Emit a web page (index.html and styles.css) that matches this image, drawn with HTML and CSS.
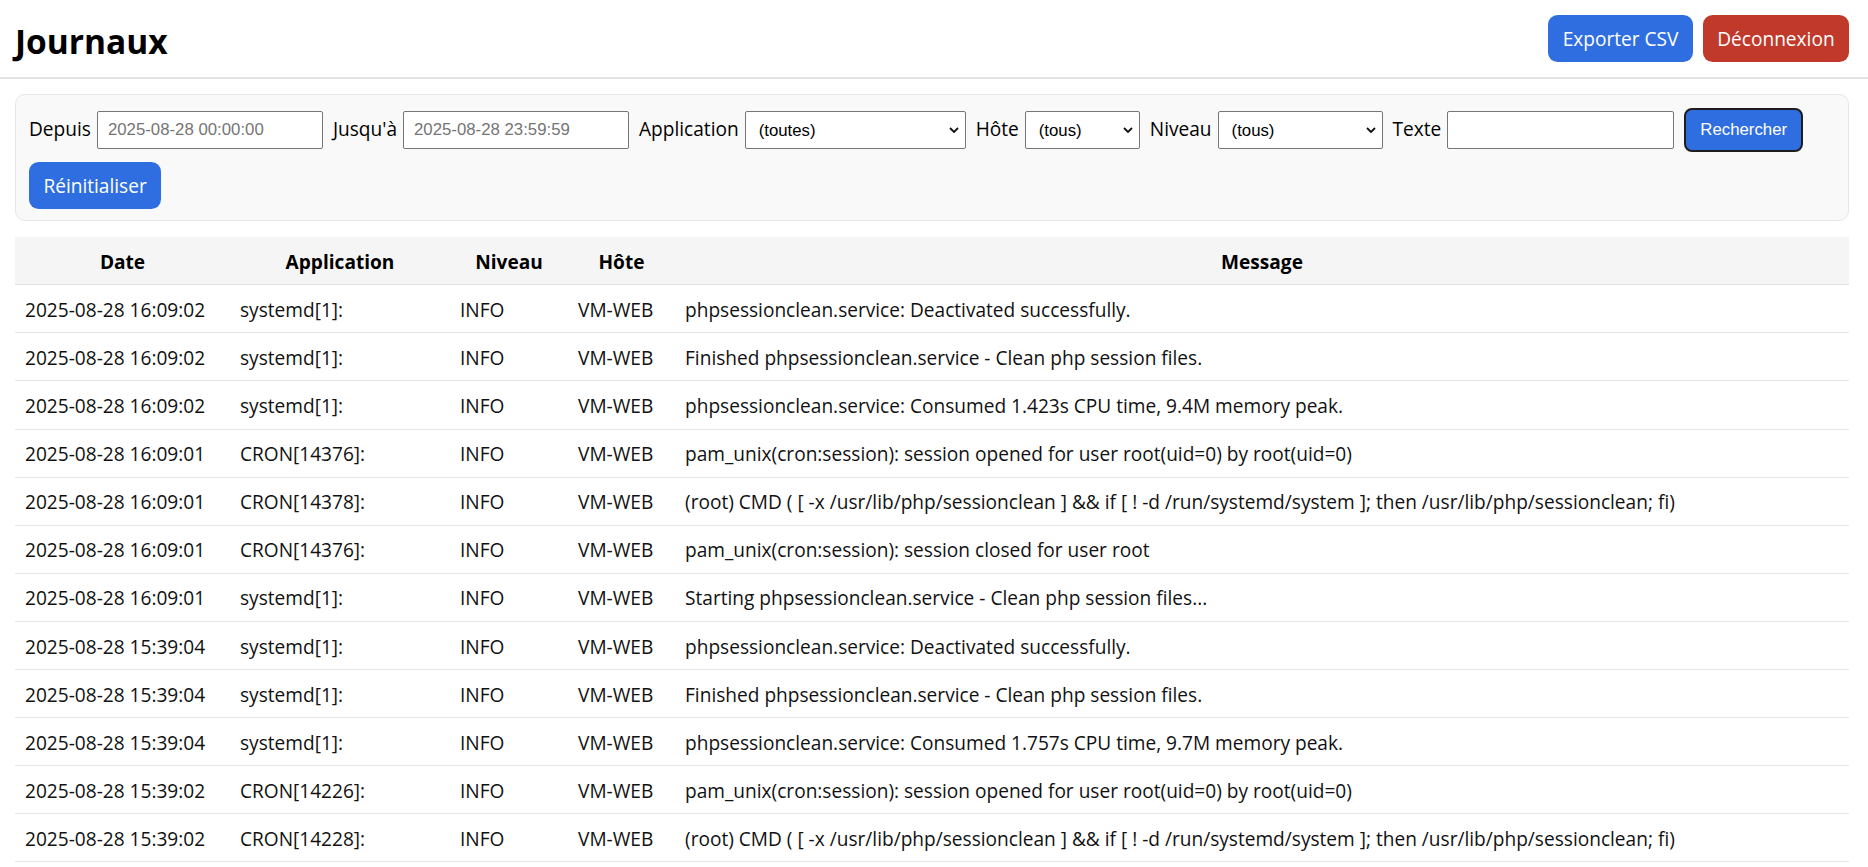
FILE: index.html
```html
<!DOCTYPE html>
<html lang="fr">
<head>
<meta charset="utf-8">
<title>Journaux</title>
<link rel="stylesheet" href="styles.css">
</head>
<body>
<header class="topbar">
  <h1 class="title">Journaux</h1>
  <div class="actions">
    <button class="btn btn-blue">Exporter CSV</button>
    <button class="btn btn-red">Déconnexion</button>
  </div>
</header>
<main class="content">
  <form class="filters">
    <label class="field">Depuis <input class="ctl ctl-date" type="text" placeholder="2025-08-28 00:00:00"></label>
    <label class="field">Jusqu'à <input class="ctl ctl-date" type="text" placeholder="2025-08-28 23:59:59"></label>
    <label class="field">Application
      <span class="select-wrap sel-app">
        <select class="ctl ctl-select"><option>(toutes)</option></select>
        <svg class="chev" width="10" height="6" viewBox="0 0 10 6"><path d="M1 1 L5 5 L9 1" fill="none" stroke="#111" stroke-width="1.8"/></svg>
      </span>
    </label>
    <label class="field">Hôte
      <span class="select-wrap sel-host">
        <select class="ctl ctl-select"><option>(tous)</option></select>
        <svg class="chev" width="10" height="6" viewBox="0 0 10 6"><path d="M1 1 L5 5 L9 1" fill="none" stroke="#111" stroke-width="1.8"/></svg>
      </span>
    </label>
    <label class="field">Niveau
      <span class="select-wrap sel-level">
        <select class="ctl ctl-select"><option>(tous)</option></select>
        <svg class="chev" width="10" height="6" viewBox="0 0 10 6"><path d="M1 1 L5 5 L9 1" fill="none" stroke="#111" stroke-width="1.8"/></svg>
      </span>
    </label>
    <label class="field">Texte <input class="ctl ctl-text" type="text"></label>
    <button type="button" class="btn-search">Rechercher</button>
    <button type="button" class="btn btn-blue">Réinitialiser</button>
  </form>

  <table class="logs">
    <colgroup>
      <col class="c-date"><col class="c-app"><col class="c-level"><col class="c-host"><col>
    </colgroup>
    <thead>
      <tr><th>Date</th><th>Application</th><th>Niveau</th><th>Hôte</th><th>Message</th></tr>
    </thead>
    <tbody>
      <tr><td>2025-08-28 16:09:02</td><td>systemd[1]:</td><td>INFO</td><td>VM-WEB</td><td>phpsessionclean.service: Deactivated successfully.</td></tr>
      <tr><td>2025-08-28 16:09:02</td><td>systemd[1]:</td><td>INFO</td><td>VM-WEB</td><td>Finished phpsessionclean.service - Clean php session files.</td></tr>
      <tr><td>2025-08-28 16:09:02</td><td>systemd[1]:</td><td>INFO</td><td>VM-WEB</td><td>phpsessionclean.service: Consumed 1.423s CPU time, 9.4M memory peak.</td></tr>
      <tr><td>2025-08-28 16:09:01</td><td>CRON[14376]:</td><td>INFO</td><td>VM-WEB</td><td>pam_unix(cron:session): session opened for user root(uid=0) by root(uid=0)</td></tr>
      <tr><td>2025-08-28 16:09:01</td><td>CRON[14378]:</td><td>INFO</td><td>VM-WEB</td><td>(root) CMD ( [ -x /usr/lib/php/sessionclean ] &amp;&amp; if [ ! -d /run/systemd/system ]; then /usr/lib/php/sessionclean; fi)</td></tr>
      <tr><td>2025-08-28 16:09:01</td><td>CRON[14376]:</td><td>INFO</td><td>VM-WEB</td><td>pam_unix(cron:session): session closed for user root</td></tr>
      <tr><td>2025-08-28 16:09:01</td><td>systemd[1]:</td><td>INFO</td><td>VM-WEB</td><td>Starting phpsessionclean.service - Clean php session files...</td></tr>
      <tr><td>2025-08-28 15:39:04</td><td>systemd[1]:</td><td>INFO</td><td>VM-WEB</td><td>phpsessionclean.service: Deactivated successfully.</td></tr>
      <tr><td>2025-08-28 15:39:04</td><td>systemd[1]:</td><td>INFO</td><td>VM-WEB</td><td>Finished phpsessionclean.service - Clean php session files.</td></tr>
      <tr><td>2025-08-28 15:39:04</td><td>systemd[1]:</td><td>INFO</td><td>VM-WEB</td><td>phpsessionclean.service: Consumed 1.757s CPU time, 9.7M memory peak.</td></tr>
      <tr><td>2025-08-28 15:39:02</td><td>CRON[14226]:</td><td>INFO</td><td>VM-WEB</td><td>pam_unix(cron:session): session opened for user root(uid=0) by root(uid=0)</td></tr>
      <tr><td>2025-08-28 15:39:02</td><td>CRON[14228]:</td><td>INFO</td><td>VM-WEB</td><td>(root) CMD ( [ -x /usr/lib/php/sessionclean ] &amp;&amp; if [ ! -d /run/systemd/system ]; then /usr/lib/php/sessionclean; fi)</td></tr>
    </tbody>
  </table>
</main>
</body>
</html>
```

FILE: styles.css
```css
* { box-sizing: border-box; }

html, body {
  margin: 0;
  padding: 0;
  background: #fff;
  color: #111;
  font-family: "Open Sans", "Noto Sans", sans-serif;
  font-size: 19.1px;
  line-height: 25.5px;
}

.topbar {
  display: flex;
  align-items: center;
  justify-content: space-between;
  padding: 15px 19px 15px 15px;
  border-bottom: 2px solid #e4e4e4;
}

.title {
  margin: 0;
  padding-top: 4px;
  font-size: 33.5px;
  line-height: 42px;
  font-weight: 700;
  color: #000;
}

.actions {
  display: flex;
  gap: 10px;
}

.btn {
  font-family: "Open Sans", "Noto Sans", sans-serif;
  font-size: 19.1px;
  line-height: 25.5px;
  padding: 11.6px 14.4px 10px;
  border: 0;
  border-radius: 9.6px;
  color: #fff;
  cursor: pointer;
}

.btn-blue { background: #2f6ee0; }
.btn-red { background: #c0392b; }

.content {
  padding: 15px 19px 0 15px;
}

.filters {
  display: flex;
  flex-wrap: wrap;
  align-items: center;
  gap: 10px 10px;
  margin: 0 0 16px 0;
  padding: 13px 13px 11px 13px;
  background: #f9f9f9;
  border: 1px solid #e6e6e6;
  border-radius: 10px;
}

.field {
  display: flex;
  align-items: center;
  gap: 6px;
  color: #000;
}

.ctl {
  height: 38px;
  border: 1px solid #767676;
  border-radius: 2px;
  background: #fff;
  font-family: "Liberation Sans", Arial, sans-serif;
  font-size: 16.8px;
  color: #000;
}

.ctl-date, .ctl-text {
  padding: 0 10px;
}
.ctl-date { width: 226px; }
.ctl-text { width: 227px; }

.ctl::placeholder { color: #757575; }

.select-wrap {
  position: relative;
  display: inline-block;
  height: 38px;
}

.ctl-select {
  -webkit-appearance: none;
  appearance: none;
  width: 100%;
  padding: 0 26px 0 13px;
}

.sel-app { width: 221px; }
.sel-host { width: 115px; }
.sel-level { width: 165px; }

.chev {
  position: absolute;
  right: 7px;
  top: 16px;
  pointer-events: none;
}

.btn-search {
  height: 44px;
  padding: 0 14px;
  background: #2f6ee0;
  color: #fff;
  border: 2px solid #1e1e1e;
  border-radius: 8px;
  font-family: "Liberation Sans", Arial, sans-serif;
  font-size: 16.8px;
  cursor: pointer;
}

.logs {
  width: 100%;
  border-collapse: collapse;
  table-layout: fixed;
}

.c-date { width: 215px; }
.c-app { width: 220px; }
.c-level { width: 118px; }
.c-host { width: 107px; }

.logs th {
  background: #f5f5f5;
  font-weight: 700;
  text-align: center;
  padding: 12.6px 10px 9px;
  border-bottom: 1px solid #e2e2e2;
  color: #000;
}

.logs td {
  padding: 12.6px 10px 9px;
  border-bottom: 1px solid #e5e5e5;
  white-space: nowrap;
  overflow: hidden;
  color: #111;
}
```
